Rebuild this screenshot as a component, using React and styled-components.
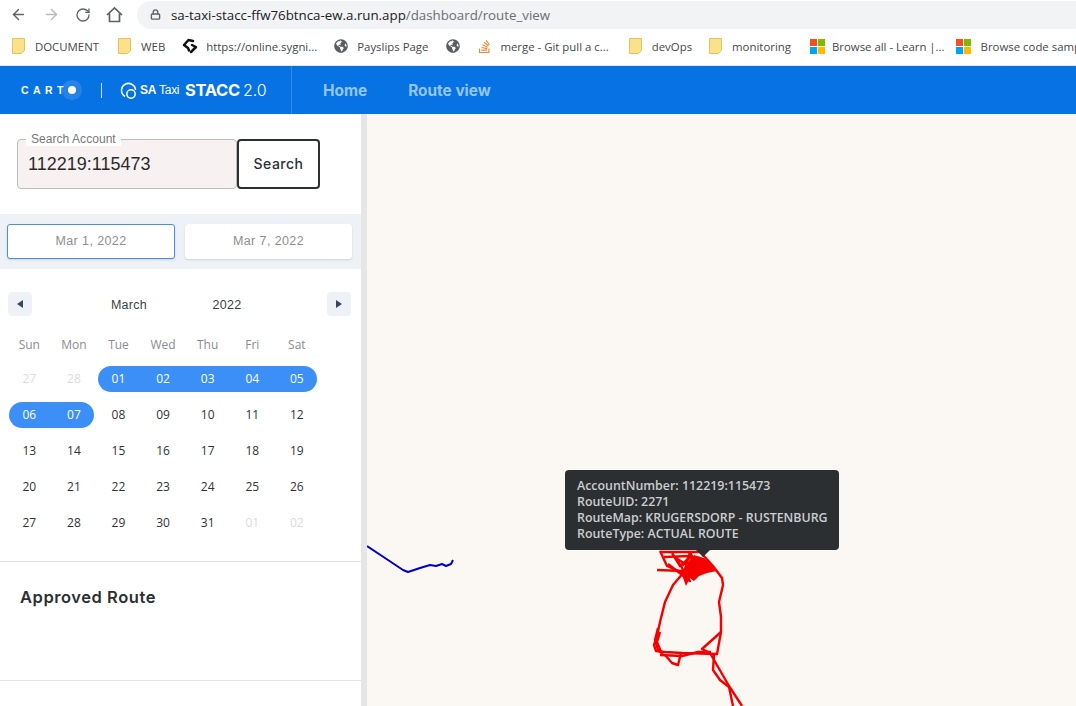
import React from "react";
import styled, { createGlobalStyle } from "styled-components";
import { ArrowLeft, ArrowRight, RotateCw, Lock } from "lucide-react";
import { FaGlobeAmericas, FaStackOverflow } from "react-icons/fa";

const bookmarks = [
    { kind: "folder", label: "DOCUMENT", gap: 10, after: 19 },
    { kind: "folder", label: "WEB", gap: 10, after: 17 },
    { kind: "sygnia", label: "https://online.sygni...", gap: 8, after: 17 },
    { kind: "globe", label: "Payslips Page", gap: 9, after: 18 },
    { kind: "globe", label: "", gap: 0, after: 17 },
    { kind: "stack", label: "merge - Git pull a c...", gap: 8, after: 20 },
    { kind: "folder", label: "devOps", gap: 10, after: 17 },
    { kind: "folder", label: "monitoring", gap: 10, after: 19 },
    { kind: "windows", label: "Browse all - Learn |...", gap: 7, after: 11 },
    { kind: "windows", label: "Browse code samp", gap: 10, after: 0 },
];

const weekdays = ["Sun", "Mon", "Tue", "Wed", "Thu", "Fri", "Sat"];

const days = [
    ["27", "muted"], ["28", "muted"], ["01", "start"], ["02", "mid"], ["03", "mid"], ["04", "mid"], ["05", "end"],
    ["06", "start"], ["07", "end"], ["08"], ["09"], ["10"], ["11"], ["12"],
    ["13"], ["14"], ["15"], ["16"], ["17"], ["18"], ["19"],
    ["20"], ["21"], ["22"], ["23"], ["24"], ["25"], ["26"],
    ["27"], ["28"], ["29"], ["30"], ["31"], ["01", "muted"], ["02", "muted"],
];

const actualRoute = [
    // outer loop
    "703,555 713,566 722,578 723,585 719,602 721,617 721,632 717,654 682,653 665,652 656,651 654,645 657,636 660,622 665,602 673,585 684,572",
    "660,551 667,566 683,573",
    "660,552 700,552",
    "664,557 690,556 682,566",
    "657,570 684,571",
    "672,553 680,566 692,556",
    "668,564 690,581 676,558 700,574 690,552 684,573",
    // lower loop and triangle
    "721,632 702,649 710,653",
    "660,655 682,656 698,652 711,652",
    "665,655 672,663 678,665 681,653",
    "710,653 729,686 742,706",
    "714,655 713,670 720,680 729,687 733,706",
    "658,628 655,640 658,650 663,654",
    "660,632 657,642 661,652",
];

const GlobalStyle = createGlobalStyle`
    html, body {
        margin: 0;
        height: 100%;
        overflow: hidden;
        background: #ffffff;
    }
    * {
        box-sizing: border-box;
    }
`;

const Page = styled.div`
    width: 1076px;
    height: 706px;
    display: flex;
    flex-direction: column;
    overflow: hidden;
    font-family: "Open Sans", "Liberation Sans", sans-serif;
`;

const BrowserBar = styled.div`
    height: 29px;
    display: flex;
    align-items: center;
    padding-left: 10px;
    color: #5f6368;
    flex: none;
`;

const NavIcon = styled.span`
    width: ${(p) => p.$w}px;
    display: flex;
    color: ${(p) => p.$color || "#5f6368"};
`;

const UrlBar = styled.div`
    flex: 1;
    height: 28px;
    margin-left: 5px;
    display: flex;
    align-items: center;
    padding-left: 13px;
    gap: 10px;
    background: #f1f3f4;
    border-radius: 14px 0 0 14px;
    font-size: 13.3px;
    color: #202124;
`;

const UrlPath = styled.span`
    color: #6b6e72;
`;

const BookmarkBar = styled.div`
    height: 37px;
    display: flex;
    align-items: center;
    padding: 0 0 2px 12px;
    white-space: nowrap;
    overflow: hidden;
    border-bottom: 1px solid #e3e5e8;
    flex: none;
`;

const Bookmark = styled.div`
    display: flex;
    align-items: center;
    flex: none;
    gap: ${(p) => p.$gap}px;
    margin-right: ${(p) => p.$after}px;
    font-size: 11.4px;
    color: #45484c;
`;

const WindowsMark = styled.span`
    width: 15px;
    height: 15px;
    display: grid;
    grid-template-columns: 7px 7px;
    grid-template-rows: 7px 7px;
    gap: 1px;
`;

const WindowsTile = styled.i`
    background: ${(p) => p.$color};
`;

const AppHeader = styled.header`
    height: 48px;
    display: flex;
    align-items: stretch;
    background: #0672e3;
    color: #ffffff;
    flex: none;
`;

const Brand = styled.div`
    width: 292px;
    display: flex;
    align-items: center;
    padding-left: 21px;
    border-right: 1px solid #2f8aea;
`;

const CartoLogo = styled.div`
    display: flex;
    align-items: center;
    width: 61px;
    font-family: "Liberation Sans", sans-serif;
    font-size: 10.5px;
    font-weight: 700;
    letter-spacing: 4.4px;
`;

const CartoDot = styled.span`
    width: 8px;
    height: 8px;
    flex: none;
    border-radius: 50%;
    background: #ffffff;
    box-shadow: 0 0 0 6px rgba(255, 255, 255, 0.12);
`;

const BrandBar = styled.span`
    width: 1px;
    height: 15px;
    margin: 0 17px 0 19px;
    background: #d7e8fb;
`;

const TaxiName = styled.span`
    margin-left: 2px;
    width: 45px;
    font-family: "Liberation Sans", sans-serif;
    font-size: 12px;
    font-weight: 700;
    letter-spacing: -0.3px;
`;

const TaxiLight = styled.span`
    margin-left: 3px;
    font-weight: 400;
`;

const Stacc = styled.span`
    font-family: Inter, sans-serif;
    font-size: 16.5px;
    font-weight: 700;
    letter-spacing: -0.3px;
`;

const StaccVersion = styled.span`
    margin-left: 3px;
    font-family: Inter, sans-serif;
    font-size: 16px;
    font-weight: 300;
`;

const Nav = styled.nav`
    display: flex;
    align-items: center;
    gap: 41px;
    padding-left: 31px;
`;

const NavItem = styled.a`
    font-family: Inter, sans-serif;
    font-size: 15.4px;
    font-weight: 700;
    color: #93c6f6;
`;

const Main = styled.main`
    flex: 1;
    display: flex;
    min-height: 0;
`;

const Sidebar = styled.aside`
    width: 367px;
    flex: none;
    border-right: 6px solid #e6e6e6;
    background: #ffffff;
`;

const SearchForm = styled.form`
    display: flex;
    padding: 25px 0 25px 17px;
`;

const SearchField = styled.div`
    position: relative;
    width: 220px;
    height: 50px;
`;

const SearchInput = styled.input`
    width: 100%;
    height: 100%;
    padding: 0 10px;
    border: 1px solid #bdbdbd;
    border-radius: 4px;
    background: #f8f1f1;
    font-family: "Liberation Sans", sans-serif;
    font-size: 18px;
    color: #2b2b2b;
    outline: none;
`;

const SearchLabel = styled.label`
    position: absolute;
    left: 9px;
    top: -7px;
    padding: 0 5px;
    background: #ffffff;
    font-family: "Liberation Sans", sans-serif;
    font-size: 12px;
    letter-spacing: 0.05px;
    line-height: 14px;
    color: #777777;
`;

const SearchButton = styled.button`
    width: 83px;
    height: 50px;
    padding: 0 0 2px;
    border: 2px solid #2c3033;
    border-radius: 4px;
    background: #ffffff;
    font-family: Inter, sans-serif;
    font-size: 14px;
    font-weight: 500;
    letter-spacing: 0.5px;
    color: #2c3033;
`;

const DateBand = styled.div`
    height: 55px;
    display: grid;
    grid-template-columns: 168px 167px;
    gap: 10px;
    padding: 10px 0 10px 7px;
    background: #eef2f6;
`;

const DateBox = styled.div`
    display: flex;
    align-items: center;
    justify-content: center;
    padding-bottom: 1px;
    border-radius: 3px;
    background: #ffffff;
    border: 1px solid ${(p) => (p.$active ? "#4a8fe0" : "#ffffff")};
    box-shadow: 0 1px 2px rgba(60, 80, 110, 0.18);
    font-family: "Liberation Sans", sans-serif;
    font-size: 12.5px;
    letter-spacing: 0.4px;
    color: #8e8e8e;
`;

const Calendar = styled.section`
    padding: 23px 0 25px 7px;
`;

const CalendarHead = styled.div`
    width: 343px;
    height: 24px;
    display: grid;
    grid-template-columns: 25px 1fr 24px;
    align-items: center;
`;

const MonthStep = styled.button`
    width: 24px;
    height: 24px;
    margin-left: 1px;
    padding: 0;
    border: 0;
    border-radius: 4px;
    background: #eef2f6;
    display: flex;
    align-items: center;
    justify-content: center;
`;

const Caret = styled.span`
    width: 0;
    height: 0;
    border-top: 4px solid transparent;
    border-bottom: 4px solid transparent;
    border-left: ${(p) => (p.$right ? "6px solid #34495e" : "0")};
    border-right: ${(p) => (p.$right ? "0" : "6px solid #34495e")};
`;

const MonthYear = styled.div`
    display: grid;
    grid-template-columns: 98px 98px;
    justify-content: center;
    justify-items: center;
    padding: 2px 2px 0 0;
    font-family: "Liberation Sans", sans-serif;
    font-size: 12.5px;
    letter-spacing: 0.3px;
    color: #3a3f44;
`;

const WeekRow = styled.div`
    display: grid;
    grid-template-columns: repeat(7, 44.6px);
    margin-top: 21px;
    line-height: 16px;
    font-size: 12px;
    text-align: center;
    color: #8a8d90;
`;

const DayGrid = styled.div`
    display: grid;
    grid-template-columns: repeat(7, 44.6px);
    grid-auto-rows: 26px;
    row-gap: 10px;
    margin-top: 13px;
`;

const Day = styled.div`
    display: flex;
    align-items: center;
    justify-content: center;
    padding-bottom: 2px;
    font-size: 12px;
    color: ${(p) => (p.$kind === "muted" ? "#dcdcdc" : p.$kind ? "#ffffff" : "#2f3336")};
    background: ${(p) => (p.$kind && p.$kind !== "muted" ? "#3d8ff8" : "transparent")};
    margin-left: ${(p) => (p.$kind === "start" ? "2px" : "0")};
    margin-right: ${(p) => (p.$kind === "end" ? "2px" : "0")};
    padding-right: ${(p) => (p.$kind === "start" ? "2px" : "0")};
    padding-left: ${(p) => (p.$kind === "end" ? "2px" : "0")};
    border-radius: ${(p) =>
        p.$kind === "start" ? "13px 0 0 13px" : p.$kind === "end" ? "0 13px 13px 0" : "0"};
`;

const RouteSection = styled.section`
    height: 120px;
    padding: 25px 20px;
    border-top: 1px solid #e4e4e4;
    border-bottom: 1px solid #e4e4e4;
`;

const RouteTitle = styled.h2`
    margin: 0;
    font-family: Inter, sans-serif;
    font-size: 16.5px;
    line-height: 20px;
    font-weight: 600;
    letter-spacing: 0.55px;
    color: #2c3033;
`;

const MapCanvas = styled.div`
    position: relative;
    flex: 1;
    background: #fbf7f3;
    overflow: hidden;
`;

const RouteLayer = styled.svg`
    position: absolute;
    inset: 0;
    width: 100%;
    height: 100%;
`;

const MapTooltip = styled.div`
    position: absolute;
    left: 198px;
    top: 356px;
    width: 274px;
    height: 80px;
    padding: 8px 12px;
    border-radius: 4px;
    background: #2c2f31;
    color: #cbcdcf;
    font-size: 12.4px;
    font-weight: 600;
    line-height: 16px;
    white-space: nowrap;
    &::after {
        content: "";
        position: absolute;
        left: 131px;
        bottom: -7px;
        border-left: 7px solid transparent;
        border-right: 7px solid transparent;
        border-top: 7px solid #2c2f31;
    }
`;

function BookmarkIcon({ kind }) {
    if (kind === "folder") {
        return (
            <svg width="13" height="16" viewBox="0 0 13 16">
                <path d="M.5.5h12v12l-3 3H.5z" fill="#fde08a" stroke="#e3c45e" />
            </svg>
        );
    }
    if (kind === "sygnia") {
        return (
            <svg
                width="16"
                height="16"
                viewBox="0 0 16 16"
                fill="none"
                stroke="#111"
                strokeWidth="2.5"
                strokeLinecap="round"
                strokeLinejoin="round">
                <path d="M11 3 6.5 2 2 7l4 3 1 2.5" />
                <path d="M10 7l4 2-5 5" />
            </svg>
        );
    }
    if (kind === "globe") return <FaGlobeAmericas size={14} color="#5a5d61" />;
    if (kind === "stack") return <FaStackOverflow size={15} color="#e98a3c" />;
    return (
        <WindowsMark>
            <WindowsTile $color="#f25022" />
            <WindowsTile $color="#7fba00" />
            <WindowsTile $color="#00a4ef" />
            <WindowsTile $color="#ffb900" />
        </WindowsMark>
    );
}

export default function App() {
    return (
        <Page>
            <GlobalStyle />
            <BrowserBar>
                <NavIcon $w={33}>
                    <ArrowLeft size={17} strokeWidth={2} />
                </NavIcon>
                <NavIcon $w={32} $color="#b8babd">
                    <ArrowRight size={17} strokeWidth={2} />
                </NavIcon>
                <NavIcon $w={31}>
                    <RotateCw size={16} strokeWidth={2} />
                </NavIcon>
                <NavIcon $w={26}>
                    <svg width="17" height="17" viewBox="0 0 17 17" fill="none" stroke="#5f6368" strokeWidth="1.7">
                        <path d="M1 9 8.5 2 16 9M3.5 7.5V15.5H13.5V7.5" />
                    </svg>
                </NavIcon>
                <UrlBar>
                    <Lock size={11} strokeWidth={3} color="#5f6368" />
                    <span>
                        sa-taxi-stacc-ffw76btnca-ew.a.run.app
                        <UrlPath>/dashboard/route_view</UrlPath>
                    </span>
                </UrlBar>
            </BrowserBar>
            <BookmarkBar>
                {bookmarks.map((b, i) => (
                    <Bookmark key={i} $gap={b.gap} $after={b.after}>
                        <BookmarkIcon kind={b.kind} />
                        {b.label && <span>{b.label}</span>}
                    </Bookmark>
                ))}
            </BookmarkBar>
            <AppHeader>
                <Brand>
                    <CartoLogo>
                        CART
                        <CartoDot />
                    </CartoLogo>
                    <BrandBar />
                    <svg width="19" height="19" viewBox="0 0 19 19" fill="none" stroke="#ffffff" strokeWidth="1.5">
                        <path d="M6 15.5A7 7 0 1 1 16.5 9" />
                        <circle cx="12" cy="13" r="4.2" />
                    </svg>
                    <TaxiName>
                        SA<TaxiLight>Taxi</TaxiLight>
                    </TaxiName>
                    <Stacc>STACC</Stacc>
                    <StaccVersion>2.0</StaccVersion>
                </Brand>
                <Nav>
                    <NavItem>Home</NavItem>
                    <NavItem>Route view</NavItem>
                </Nav>
            </AppHeader>
            <Main>
                <Sidebar>
                    <SearchForm>
                        <SearchField>
                            <SearchLabel>Search Account</SearchLabel>
                            <SearchInput readOnly value="112219:115473" />
                        </SearchField>
                        <SearchButton type="button">Search</SearchButton>
                    </SearchForm>
                    <DateBand>
                        <DateBox $active>Mar 1, 2022</DateBox>
                        <DateBox>Mar 7, 2022</DateBox>
                    </DateBand>
                    <Calendar>
                        <CalendarHead>
                            <MonthStep type="button">
                                <Caret />
                            </MonthStep>
                            <MonthYear>
                                <span>March</span>
                                <span>2022</span>
                            </MonthYear>
                            <MonthStep type="button">
                                <Caret $right />
                            </MonthStep>
                        </CalendarHead>
                        <WeekRow>
                            {weekdays.map((d) => (
                                <span key={d}>{d}</span>
                            ))}
                        </WeekRow>
                        <DayGrid>
                            {days.map(([label, kind], i) => (
                                <Day key={i} $kind={kind}>
                                    {label}
                                </Day>
                            ))}
                        </DayGrid>
                    </Calendar>
                    <RouteSection>
                        <RouteTitle>Approved Route</RouteTitle>
                    </RouteSection>
                </Sidebar>
                <MapCanvas>
                    <RouteLayer viewBox="367 114 709 592" fill="none" strokeLinejoin="round">
                        <polyline
                            points="367,546 385,558 403,570 408,572 420,568 430,565 436,566 442,564 446,566 451,564 453,560"
                            stroke="#0000cc"
                            strokeWidth="2"
                        />
                        {actualRoute.map((points, i) => (
                            <polyline key={i} points={points} stroke="#f40000" strokeWidth="2.4" />
                        ))}
                        <polygon
                            points="682,572 688,562 694,555 704,558 712,565 717,571 707,573 699,576 694,581 690,578 686,586 683,578"
                            fill="#f40000"
                        />
                    </RouteLayer>
                    <MapTooltip>
                        AccountNumber: 112219:115473
                        <br />
                        RouteUID: 2271
                        <br />
                        RouteMap: KRUGERSDORP - RUSTENBURG
                        <br />
                        RouteType: ACTUAL ROUTE
                    </MapTooltip>
                </MapCanvas>
            </Main>
        </Page>
    );
}
